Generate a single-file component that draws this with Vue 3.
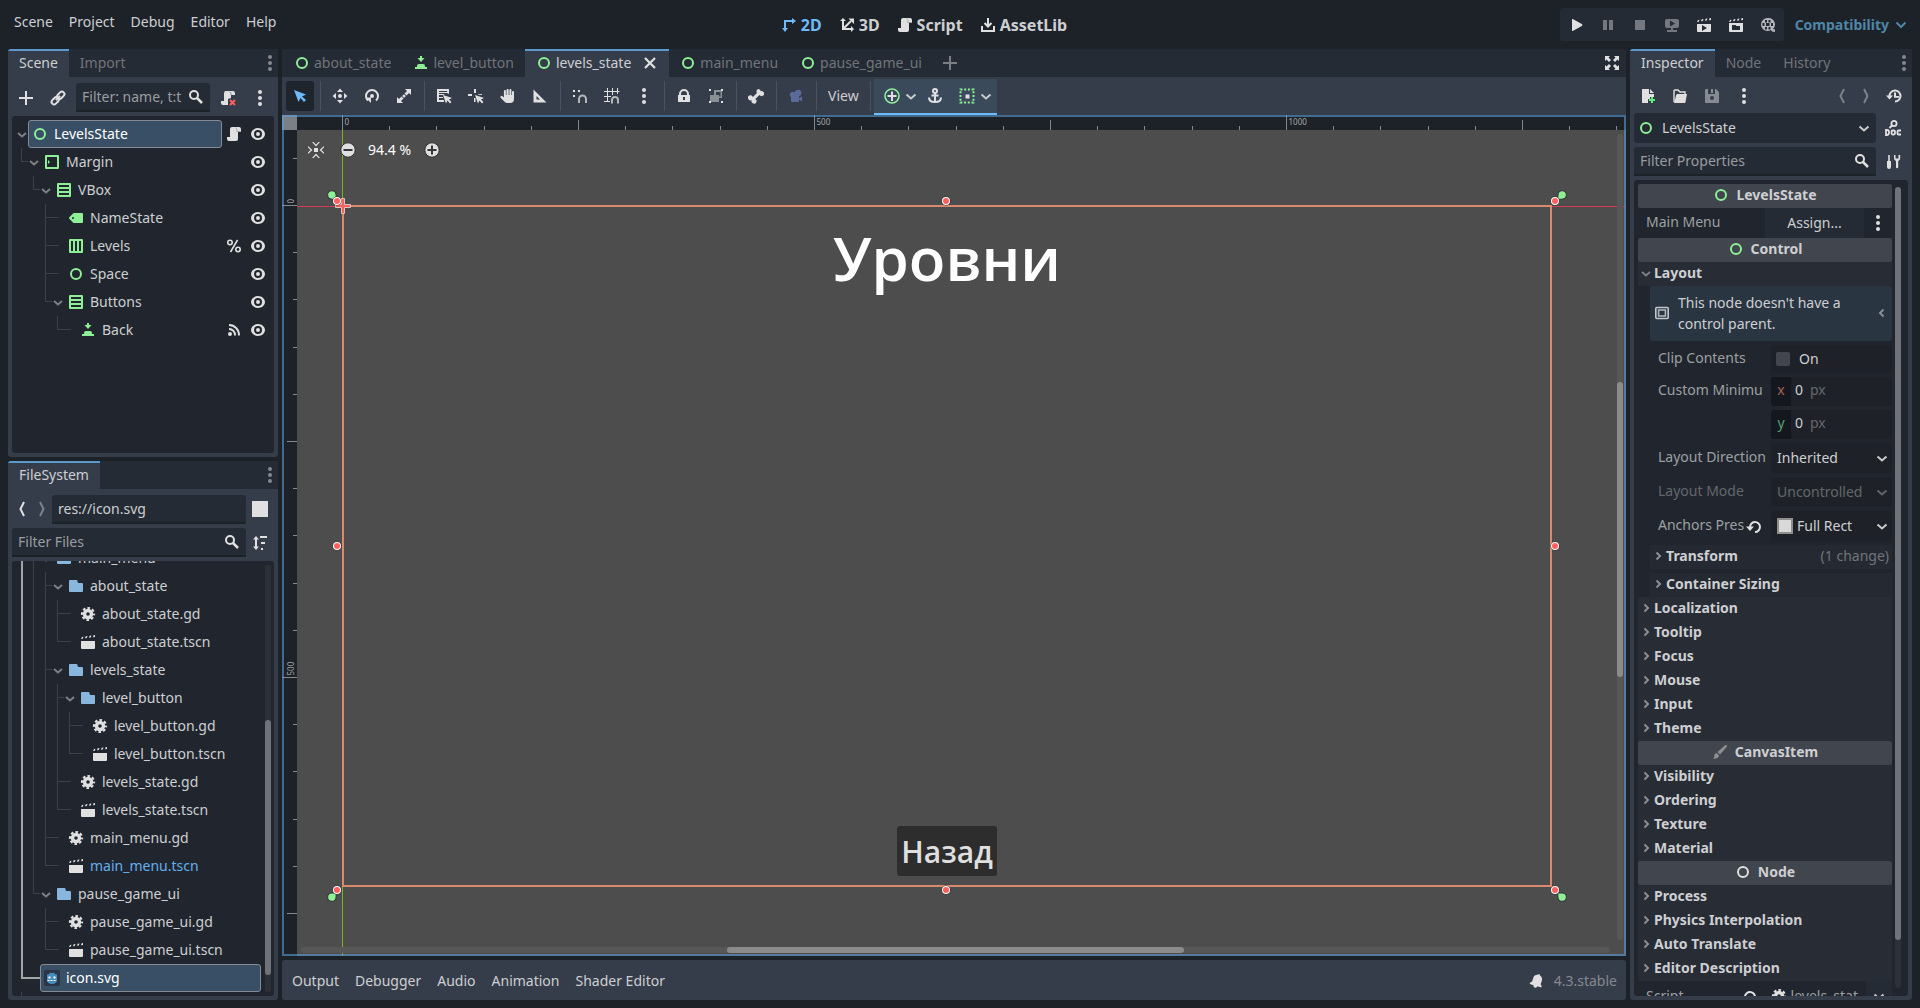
<script setup>
import { h } from 'vue'

const W = '#e0e0e0'
const G = '#8eef97'
const scrollShape = 'M6 1a2 2 0 0 0-2 2v8H1v2a2 2 0 0 0 2 2h7a2 2 0 0 0 2-2V6h3V3a2 2 0 0 0-2-2z'
const clapTop = 'M1 5l1-2 1.500-.3-.7 2.100zM5 4.300l.7-2 1.800-.3-.7 2zM9 3.700l.7-2 1.800-.3-.7 2zM13 3.200l.6-2 1.400-.2v2z'

const glyphs = {
  control: `<circle cx="8" cy="8" r="5" fill="none" stroke="${G}" stroke-width="2"/>`,
  node: `<circle cx="8" cy="8" r="5" fill="none" stroke="${W}" stroke-width="2"/>`,
  margin: `<path fill="${G}" fill-rule="evenodd" d="M2 1a1 1 0 0 0-1 1v12a1 1 0 0 0 1 1h12a1 1 0 0 0 1-1V2a1 1 0 0 0-1-1zm1 2h10v10H3zm1 3v4l2-2z"/>`,
  vbox: `<path fill="${G}" fill-rule="evenodd" d="M2 1a1 1 0 0 0-1 1v12a1 1 0 0 0 1 1h12a1 1 0 0 0 1-1V2a1 1 0 0 0-1-1zm1 2h10v2H3zm0 4h10v2H3zm0 4h10v2H3z"/>`,
  hbox: `<path fill="${G}" fill-rule="evenodd" d="M2 1a1 1 0 0 0-1 1v12a1 1 0 0 0 1 1h12a1 1 0 0 0 1-1V2a1 1 0 0 0-1-1zm1 2h2v10H3zm4 0h2v10H7zm4 0h2v10h-2z"/>`,
  label: `<path fill="${G}" fill-rule="evenodd" d="M6 3a1 1 0 0 0-.7.3l-4 4a1 1 0 0 0 0 1.400l4 4A1 1 0 0 0 6 13h8a1 1 0 0 0 1-1V4a1 1 0 0 0-1-1zM5 7a1 1 0 0 1 0 2 1 1 0 0 1 0-2z"/>`,
  button: `<path fill="${G}" d="M7 1v2H4.500L8 7l3.500-4H9V1zM4 12v-1a2 2 0 0 1 2-2h4a2 2 0 0 1 2 2v1h2v2H2v-2z"/>`,
  eye: `<path fill="${W}" fill-rule="evenodd" d="M8 2C4 2 1 5 1 8s3 6 7 6 7-3 7-6-3-6-7-6zm0 2a4 4 0 0 1 0 8 4 4 0 0 1 0-8zm0 2a2 2 0 0 0 0 4 2 2 0 0 0 0-4z"/>`,
  script: `<path fill="${W}" d="${scrollShape}"/><path d="M11 6V3.500A1.500 1.500 0 0 0 9.500 2M11 5.500h4" fill="none" stroke="#a5a7aa"/>`,
  scriptx: `<path fill="${W}" d="M6 1a2 2 0 0 0-2 2v8H1v2a2 2 0 0 0 2 2h5V9l3-1V5h4V3a2 2 0 0 0-2-2z"/><path d="M11 5V3.500A1.500 1.500 0 0 0 9.500 2" fill="none" stroke="#8b8d91"/><path d="M10 10l5 5m0-5l-5 5" stroke="#ff5f5f" stroke-width="2"/>`,
  unique: `<g fill="none" stroke="${W}" stroke-width="1.600"><circle cx="4" cy="4.500" r="2.200"/><circle cx="12" cy="11.500" r="2.200"/><path d="M11.500 2l-7 12"/></g>`,
  signal: `<g fill="none" stroke="${W}" stroke-width="2"><path d="M3 7a6 6 0 0 1 6 6.500M3 3a10 10 0 0 1 10 10.500"/></g><circle cx="4" cy="12" r="2" fill="${W}"/>`,
  plus: `<path fill="${W}" d="M7 1v6H1v2h6v6h2V9h6V7H9V1z"/>`,
  plusdim: `<path fill="#7b7f84" d="M7 1v6H1v2h6v6h2V9h6V7H9V1z"/>`,
  link: `<g fill="none" stroke="${W}" stroke-width="2" transform="rotate(-45 8 8)"><rect x="0" y="5.500" width="8" height="5" rx="2.500"/><rect x="8" y="5.500" width="8" height="5" rx="2.500"/><path d="M5 8h6"/></g>`,
  search: `<g fill="none" stroke="${W}" stroke-width="2"><circle cx="6" cy="6" r="4"/><path d="M9 9l5 5" stroke-width="2.500"/></g>`,
  dots: `<g fill="${W}"><circle cx="8" cy="2" r="2"/><circle cx="8" cy="8" r="2"/><circle cx="8" cy="14" r="2"/></g>`,
  dotsdim: `<g fill="#85888d"><circle cx="8" cy="2" r="2"/><circle cx="8" cy="8" r="2"/><circle cx="8" cy="14" r="2"/></g>`,
  down: `<path d="M4 7l4 3.500L12 7" fill="none" stroke="#7d8186" stroke-width="2"/>`,
  downlight: `<path d="M3.500 6.500l4.500 4 4.500-4" fill="none" stroke="#c8cacc" stroke-width="2"/>`,
  downdim: `<path d="M3.500 6.500l4.500 4 4.500-4" fill="none" stroke="#63676c" stroke-width="2"/>`,
  downblue: `<path d="M3.500 5.500L8 10l4.500-4.500" fill="none" stroke="#4f85a6" stroke-width="2"/>`,
  right: `<path d="M6.500 4.500L10 8l-3.500 3.500" fill="none" stroke="#8b8e93" stroke-width="2"/>`,
  left: `<path d="M9.500 4.500L6 8l3.500 3.500" fill="none" stroke="#8b8e93" stroke-width="2"/>`,
  back: `<path d="M10 1L6.500 8 10 15" fill="none" stroke="${W}" stroke-width="2"/>`,
  backdim: `<path d="M10 1L6.500 8 10 15" fill="none" stroke="#7d8289" stroke-width="2"/>`,
  fwd: `<path d="M6 1l3.500 7L6 15" fill="none" stroke="#7d8289" stroke-width="2"/>`,
  square: `<path fill="${W}" d="M0 0h16v16H0z"/>`,
  rect: `<path fill="#d9d9d9" stroke="#8e8e8e" stroke-width="2" d="M1 1h14v14H1z"/>`,
  sort: `<path fill="${W}" d="M4 1L1 4.500h2v7H1L4 15l3-3.500H5v-7h2zM8 1h7v2H8zM9 7h4v2H9zM9 13h2v2H9z"/>`,
  folder: `<path fill="#88b6dd" d="M2 2a1 1 0 0 0-1 1v10a1 1 0 0 0 1 1h12a1 1 0 0 0 1-1V6a1 1 0 0 0-1-1h-3.500l-1-1V3a1 1 0 0 0-1-1z"/>`,
  gear: `<g fill="none" stroke="${W}"><circle cx="8" cy="8" r="3.500" stroke-width="3.400"/><circle cx="8" cy="8" r="6" stroke-width="2.200" stroke-dasharray="2.600 2.112" stroke-dashoffset="1.300"/></g>`,
  scene: `<path fill="${W}" d="M1 7h14v7a1 1 0 0 1-1 1H2a1 1 0 0 1-1-1z${clapTop}"/>`,
  godot: `<rect x="0" y="0" width="16" height="16" rx="2" fill="#2b3545"/><path fill="#478cbf" d="M3 5l1-1 1 .6L6 2.500l1.500.5h1l1.500-.5 1 2.100 1-.6 1 1v5.500c0 2-2.500 3.500-5 3.500s-5-1.500-5-3.500z"/><path stroke="#fff" stroke-dasharray="2 1" d="M3.500 10.500h9"/><circle cx="5.500" cy="7.500" r="1.200" fill="#dfe8f0"/><circle cx="10.500" cy="7.500" r="1.200" fill="#dfe8f0"/>`,
  close: `<path d="M3 3l10 10M13 3L3 13" stroke="${W}" stroke-width="2.200"/>`,
  expand: `<path fill="${W}" d="M1 1h5L4.500 2.500 7 5 5 7 2.500 4.500 1 6zM15 1v5l-1.500-1.500L11 7 9 5l2.500-2.500L10 1zM1 15v-5l1.500 1.500L5 9l2 2-2.500 2.500L6 15zM15 15h-5l1.500-1.500L9 11l2-2 2.500 2.500L15 10z"/>`,
  twod: `<g fill="none" stroke="#70bafa" stroke-width="2"><path d="M4 12V4h8"/></g><path fill="#70bafa" d="M11 1l4 3-4 3zM1 11h6l-3 4z"/>`,
  threed: `<g fill="none" stroke="${W}" stroke-width="2"><path d="M4 4v8h8M4 12l8-8"/></g><path fill="${W}" d="M1 4l3-3 3 3zM12 9l3 3-3 3zM9.500 1.500H15V7z"/>`,
  asset: `<g fill="none" stroke="${W}" stroke-width="2"><path d="M2 9v5h12V9M8 1v8M4.500 6L8 9.500 11.500 6"/></g>`,
  play: `<path fill="${W}" d="M4 13.500a.5.500 0 0 0 .8.400l9-5a1 1 0 0 0 0-1.800l-9-5a.5.500 0 0 0-.8.400z"/>`,
  pause: `<path fill="#75797f" d="M3 3h4v10H3zM9 3h4v10H9z"/>`,
  stop: `<path fill="#75797f" d="M3 3h10v10H3z"/>`,
  remote: `<path fill="#75797f" fill-rule="evenodd" d="M3 2a2 2 0 0 0-2 2v5a2 2 0 0 0 2 2h4v2H3v2h10v-2H9v-2h4a2 2 0 0 0 2-2V4a2 2 0 0 0-2-2zm3 1.500L11 6.500 6 9.500z"/>`,
  playscene: `<path fill="${W}" fill-rule="evenodd" d="M1 7h14v7a1 1 0 0 1-1 1H2a1 1 0 0 1-1-1zm5 1v6l5-3z"/><path fill="${W}" d="${clapTop}"/>`,
  playcustom: `<path fill="${W}" fill-rule="evenodd" d="M1 6h14v8a1 1 0 0 1-1 1H2a1 1 0 0 1-1-1zm3 2v5h8V9H8.500L7.500 8z"/><path fill="${W}" d="${clapTop}"/>`,
  movie: `<path fill="#b4b6b9" fill-rule="evenodd" d="M7.500 1a6.500 6.500 0 1 0 0 13 6.500 6.500 0 0 0 3.500-1l1 1.500 3 .5v-2.500l-2-.500A6.500 6.500 0 0 0 7.500 1zM5 3h2v2.500H5zM8.500 3h2v2.500h-2zM2.500 6h2v3h-2zm3.500 0h3.500v3H6zm5 0h2v3h-2zM5 10h2v2.500H5zM8.500 10h2v2.500h-2z"/>`,
  select: `<path fill="#70bafa" d="M2 2l4.500 12 2-4 3.500 4 2-2-4-3.500 4-2z"/>`,
  move: `<path fill="${W}" d="M8 0.500L5 4h6zM8 15.500L5 12h6zM.5 8L4 5v6zM15.500 8L12 5v6zM8 6a2 2 0 1 0 0 4 2 2 0 0 0 0-4z"/>`,
  rotate: `<path d="M4 12.500A6 6 0 1 1 12 12.500" fill="none" stroke="${W}" stroke-width="2"/><path fill="${W}" d="M1.500 9.500H7V15z"/><circle cx="8" cy="8" r="2" fill="${W}"/>`,
  scale: `<path fill="${W}" d="M9 1h6v6l-2-2-2.500 2.500-2-2L11 3zM7 15H1V9l2 2 2.500-2.500 2 2L5 13z"/><circle cx="8" cy="8" r="1.500" fill="${W}"/>`,
  listselect: `<path fill="${W}" fill-rule="evenodd" d="M1 1h12v5l-2-1H3v1h6L7 7H3v2h4v1H3v2h5v2H1zm2 2v1h8V3z"/><path fill="${W}" d="M7 7l3 8.500 1.500-3 2.500 3 1.500-1.500-2.500-2.500 3-1.500z"/>`,
  pivot: `<path fill="${W}" d="M6 1h2v4H6zM0 6h4v2H0zM10 6h4v1l-4-.500zM6 10h1.500v4H6zM7 7l3 8.500 1.500-3 2.500 3 1.500-1.500-2.500-2.500 3-1.500z"/>`,
  hand: `<path fill="${W}" d="M7.500 1a1 1 0 0 0-1 1v5h-.6V3a1 1 0 0 0-2 0v6.500L2.500 8.200A1.200 1.200 0 0 0 .8 10l4 4c.7.700 1.700 1 3.200 1h2a4 4 0 0 0 4-4V4a1 1 0 0 0-2 0v3h-.6V2a1 1 0 0 0-2 0v5h-.7V2a1 1 0 0 0-1.200-1z"/>`,
  ruler: `<path fill="${W}" fill-rule="evenodd" d="M1.500 1.500v13h13zM4.500 8l3.500 3.500H4.500z"/>`,
  snap: `<g fill="${W}"><path d="M1 2h2v2H1zM1 7h2v2H1zM6 2h2v2H6z"/></g><path d="M7 15v-4a3.500 3.500 0 0 1 7 0v4" fill="none" stroke="#b4b6b9" stroke-width="2"/>`,
  gridsnap: `<path fill="none" stroke="${W}" d="M3.500 0v14M8.500 0v7M13.500 0v6M0 3.500h15.500M0 8.500h7M0 13.500h6"/><path d="M8 15.500v-3.500a3 3 0 0 1 6 0v3.500" fill="none" stroke="#b4b6b9" stroke-width="2"/>`,
  lock: `<path fill="${W}" fill-rule="evenodd" d="M8 1a5 5 0 0 0-5 5v1H2v7h12V7h-1V6a5 5 0 0 0-5-5zm0 2a3 3 0 0 1 3 3v1H5V6a3 3 0 0 1 3-3zm-1 6h2v3H7z"/>`,
  group: `<path fill="#8a8e95" fill-rule="evenodd" d="M6 2h8v8h-3v4H2V7h4zm2 2v3h3v1.500h1.500V4z"/><path fill="${W}" d="M1 1h2v2H1zM13 1h2v2h-2zM1 13h2v2H1zM13 13h2v2h-2z"/>`,
  bone: `<path fill="${W}" d="M10.500 1a2.500 2.500 0 0 0-1.500 4L4.800 9a2.500 2.500 0 1 0-1 3 2.500 2.500 0 1 0 3.500-1l4.200-4a2.500 2.500 0 1 0 1.200-3.800A2.500 2.500 0 0 0 10.500 1z"/>`,
  camera: `<path fill="#5b6b99" d="M9.500 2a3 3 0 0 0-3 2.500A2.500 2.500 0 1 0 3 9v4a1 1 0 0 0 1 1h6a1 1 0 0 0 1-1v-1.500l3 2v-5l-3 1.500V8A3 3 0 0 0 9.500 2z"/>`,
  addpoint: `<circle cx="8" cy="8" r="7" fill="none" stroke="${G}" stroke-width="1.600"/><path fill="${W}" d="M7 3.500h2V7h3.500v2H9v4H7V9H3.500V7H7z"/>`,
  anchor: `<g fill="none" stroke="${W}" stroke-width="2"><circle cx="8" cy="3" r="2"/><path d="M8 5v9M4.500 7.500h7M2 9.500c0 3 2.500 4.500 6 4.500s6-1.500 6-4.500"/></g>`,
  container: `<path d="M1.500 1.500h13v13h-13z" fill="none" stroke="${G}" stroke-width="2" stroke-dasharray="2 1.714"/><path fill="${W}" d="M6.500 6.500h4v4h-4z"/>`,
  center: `<path fill="${W}" d="M6 6h4v4H6zM4 0l4 4.500L12 0h-1.500L8 2.500 5.500 0zM4 16l4-4.500 4 4.500h-1.500L8 13.500 5.500 16zM0 4l4.500 4L0 12v-1.500L2.500 8 0 5.500zM16 4l-4.500 4 4.500 4v-1.500L13.500 8 16 5.500z"/>`,
  zoomout: `<circle cx="8" cy="8" r="7.200" fill="${W}" stroke="#333" /><path fill="#33373d" d="M3.500 7h9v2h-9z"/>`,
  zoomin: `<circle cx="8" cy="8" r="7.200" fill="${W}" stroke="#333" /><path fill="#33373d" d="M7 3.500h2V7h3.500v2H9v3.500H7V9H3.500V7H7z"/>`,
  bell: `<path fill="${W}" transform="rotate(18 8 8)" d="M8 1a1.500 1.500 0 0 0-1.400 1A4.500 4.500 0 0 0 3.500 6.500V10L2 11.500v1.500h4a2 2 0 0 0 4 0h4v-1.500L12.500 10V6.500A4.500 4.500 0 0 0 9.400 2 1.500 1.500 0 0 0 8 1z"/>`,
  newfile: `<path fill="${W}" d="M2 1v14h6v-4h2V9h4V6H9V1zM10 1v4h4z"/><path fill="#5fef7a" d="M11 9v2H9v2h2v2h2v-2h2v-2h-2V9z"/>`,
  open: `<path d="M2 14V3a1 1 0 0 1 1-1h3l2 2h5v2" fill="none" stroke="${W}" stroke-width="1.400"/><path fill="${W}" d="M5 6h10l-1.500 8a1 1 0 0 1-1 1H2l2.200-8z"/>`,
  save: `<path fill="#868a91" fill-rule="evenodd" d="M2 1a1 1 0 0 0-1 1v12a1 1 0 0 0 1 1h12a1 1 0 0 0 1-1V4l-3-3h-1v5H4V1zm6 7a2 2 0 1 1 0 4 2 2 0 0 1 0-4z"/><path fill="#868a91" d="M7 1h2v4H7z"/>`,
  history: `<path d="M3.500 8A5.500 5.500 0 1 1 9 13.500" fill="none" stroke="${W}" stroke-width="2"/><path fill="${W}" d="M0 7.500h7L3.500 11.500zM8 4.500h2V8h3v1.800H8z"/>`,
  doc: `<circle cx="9" cy="3.500" r="2.600" fill="none" stroke="${W}" stroke-width="1.800"/><path d="M7 5.500L4.500 8" stroke="${W}" stroke-width="2"/><g fill="none" stroke="${W}" stroke-width="1.800"><path d="M1 10v5h1a2 2 0 0 0 2-2v-1a2 2 0 0 0-2-2zM16 10.500h-2.500a1 1 0 0 0-1 1v2a1 1 0 0 0 1 1H16"/><rect x="6.500" y="10.500" width="3.500" height="4" rx="1.200"/></g>`,
  tools: `<path fill="${W}" d="M3.200 1h1.600v6H6v6a2 2 0 0 1-4 0V7h1.200zM9 1v3.500a3 3 0 0 0 2 2.500v6.500a1.200 1.200 0 0 0 2.200 0V7a3 3 0 0 0 2-2.500V1h-1.700v3.500h-3V1z"/>`,
  frame: `<rect x="1.800" y="2.500" width="12.400" height="11" rx="1" fill="none" stroke="#c4c6c9" stroke-width="1.600"/><rect x="4.600" y="5" width="6.800" height="6" fill="none" stroke="#aeb2b7" stroke-width="1.600"/>`,
  revert: `<path d="M4 9.500A5 5 0 1 1 9 14" fill="none" stroke="${W}" stroke-width="2"/><path fill="${W}" d="M0 8.500h8L4 13z"/>`,
  brush: `<path fill="#8e8e8e" d="M13 1.300a1.200 1.200 0 0 1 1.700 1.700L8 10.500 5.500 8zM4.800 9l2.200 2.200c0 2-1.500 3.600-6 3.600 1.200-1 1-2 1.200-3.400A2.800 2.800 0 0 1 4.800 9z"/>`,
}
const Icon = (p) => h('svg', { viewBox: '0 0 16 16', width: 16, height: 16, 'aria-hidden': 'true', innerHTML: glyphs[p.name] })
Icon.props = ['name']

const menus = ['Scene', 'Project', 'Debug', 'Editor', 'Help']
const screens = [
  { t: '2D', i: 'twod', on: true }, { t: '3D', i: 'threed' }, { t: 'Script', i: 'script' }, { t: 'AssetLib', i: 'asset' },
]
const runs = [['Run', 'play'], ['Pause', 'pause'], ['Stop', 'stop'], ['Remote debug', 'remote'], ['Run scene', 'playscene'], ['Run custom scene', 'playcustom'], ['Movie maker', 'movie']]

// Guide codes, one per depth column: "|" passes, "T" branches, "L" ends; "!" and "E" are the highlighted pass and end.
const nodes = [
  { t: 'LevelsState', i: 'control', g: '', open: true, sel: true, b: ['script', 'eye'] },
  { t: 'Margin', i: 'margin', g: 'L', open: true, b: ['eye'] },
  { t: 'VBox', i: 'vbox', g: ' L', open: true, b: ['eye'] },
  { t: 'NameState', i: 'label', g: '  T', b: ['eye'] },
  { t: 'Levels', i: 'hbox', g: '  T', b: ['unique', 'eye'] },
  { t: 'Space', i: 'control', g: '  T', b: ['eye'] },
  { t: 'Buttons', i: 'vbox', g: '  L', open: true, b: ['eye'] },
  { t: 'Back', i: 'button', g: '   L', b: ['signal', 'eye'] },
]
const files = [
  { t: 'main_menu', i: 'folder', g: '!T', open: true },
  { t: 'about_state', i: 'folder', g: '!|T', open: true },
  { t: 'about_state.gd', i: 'gear', g: '!||T' },
  { t: 'about_state.tscn', i: 'scene', g: '!||L' },
  { t: 'levels_state', i: 'folder', g: '!|T', open: true },
  { t: 'level_button', i: 'folder', g: '!||T', open: true },
  { t: 'level_button.gd', i: 'gear', g: '!|||T' },
  { t: 'level_button.tscn', i: 'scene', g: '!|||L' },
  { t: 'levels_state.gd', i: 'gear', g: '!||T' },
  { t: 'levels_state.tscn', i: 'scene', g: '!||L' },
  { t: 'main_menu.gd', i: 'gear', g: '!|T' },
  { t: 'main_menu.tscn', i: 'scene', g: '!|L', hot: true },
  { t: 'pause_game_ui', i: 'folder', g: '!L', open: true },
  { t: 'pause_game_ui.gd', i: 'gear', g: '! T' },
  { t: 'pause_game_ui.tscn', i: 'scene', g: '! L' },
  { t: 'icon.svg', i: 'godot', g: 'E', sel: true },
]
function guide(row, strong) {
  let d = ''
  const end = row.g.length * 12 + (row.open ? 0 : 7)
  ;[...row.g].forEach((c, k) => {
    const x = k * 12 + 5.5
    if (strong) {
      if (c === '!') d += `M${x + 0.5} 0v28`
      if (c === 'E') d += `M${x + 0.5} 0v14H24`
    } else {
      if (c === '|' || c === 'T') d += `M${x} 0v28`
      if (c === 'L') d += `M${x} 0v13.5`
      if (c === 'T' || c === 'L') d += `M${x} 13.5H${end}`
    }
  })
  return d
}

const sceneTabs = [
  { t: 'about_state', i: 'control' }, { t: 'level_button', i: 'button' }, { t: 'levels_state', i: 'control', on: true },
  { t: 'main_menu', i: 'control' }, { t: 'pause_game_ui', i: 'control' },
]
const tools = ['select', '|', 'move', 'rotate', 'scale', '|', 'listselect', 'pivot', 'hand', 'ruler', '|', 'snap', 'gridsnap', 'dots', '|', 'lock', 'group', '|', 'bone', '|', 'camera', '|']

const step = 47.2
const hTicks = Array.from({ length: 28 }, (_, k) => ({ p: Math.round(60 + k * step) + 0.5, n: k % 10 === 0 ? 15 : k % 5 === 0 ? 10 : 4, t: k % 10 === 0 ? k * 50 : null }))
const vTicks = Array.from({ length: 17 }, (_, j) => j - 1).map((k) => ({ p: Math.round(90 + k * step) + 0.5, n: k % 10 === 0 ? 15 : k % 5 === 0 ? 10 : 4, t: k % 10 === 0 ? k * 50 : null }))
const handles = [[55, 86], [664, 86], [1273, 86], [55, 431], [1273, 431], [55, 775], [664, 775], [1273, 775]]
const anchors = [[50, 80, 45], [1280, 80, 135], [50, 782, -45], [1280, 782, -135]]
const bottomTabs = ['Output', 'Debugger', 'Audio', 'Animation', 'Shader Editor']
const groupsA = ['Localization', 'Tooltip', 'Focus', 'Mouse', 'Input', 'Theme']
const groupsB = ['Visibility', 'Ordering', 'Texture', 'Material']
const groupsC = ['Process', 'Physics Interpolation', 'Auto Translate', 'Editor Description']
</script>

<template>
  <div class="editor">
    <header class="topbar">
      <nav class="menus"><button v-for="m in menus" :key="m">{{ m }}</button></nav>
      <nav class="screens">
        <button v-for="s in screens" :key="s.t" :class="{ on: s.on }"><Icon :name="s.i" />{{ s.t }}</button>
      </nav>
      <div class="right-tools">
        <div class="runbar"><button v-for="r in runs" :key="r[0]" :aria-label="r[0]"><Icon :name="r[1]" /></button></div>
        <button class="renderer">Compatibility<Icon name="downblue" /></button>
      </div>
    </header>

    <main class="work">
      <aside class="side left">
        <section class="dock scene-dock">
          <div class="tabs">
            <button class="tab on">Scene</button><button class="tab">Import</button>
            <button class="tab-menu" aria-label="Dock menu"><Icon name="dotsdim" /></button>
          </div>
          <div class="bar scene-bar">
            <button class="ib" aria-label="Add node"><Icon name="plus" /></button>
            <button class="ib" aria-label="Instantiate scene"><Icon name="link" /></button>
            <label class="field"><input type="text" placeholder="Filter: name, t:t" aria-label="Filter nodes" /><Icon name="search" /></label>
            <button class="ib" aria-label="Detach script"><Icon name="scriptx" /></button>
            <button class="ib" aria-label="Scene options"><Icon name="dots" /></button>
          </div>
          <ul class="tree">
            <li v-for="n in nodes" :key="n.t" class="row">
              <svg v-if="n.g" class="guide" :width="n.g.length * 12 + (n.open ? 0 : 12)" height="28"><path :d="guide(n, false)" /></svg>
              <span v-if="n.open" class="arrow"><Icon name="down" /></span>
              <button class="item" :class="{ sel: n.sel }"><Icon :name="n.i" />{{ n.t }}</button>
              <span class="badges"><Icon v-for="b in n.b" :key="b" :name="b" /></span>
            </li>
          </ul>
        </section>

        <section class="dock file-dock">
          <div class="tabs">
            <button class="tab on">FileSystem</button>
            <button class="tab-menu" aria-label="Dock menu"><Icon name="dotsdim" /></button>
          </div>
          <div class="bar path-bar">
            <button class="nb" aria-label="Back"><Icon name="back" /></button>
            <button class="nb" aria-label="Forward"><Icon name="fwd" /></button>
            <label class="field"><input type="text" value="res://icon.svg" aria-label="Path" /></label>
            <button class="ib" aria-label="Split mode"><Icon name="square" /></button>
          </div>
          <div class="bar filter-bar">
            <label class="field"><input type="text" placeholder="Filter Files" aria-label="Filter files" /><Icon name="search" /></label>
            <button class="ib" aria-label="Sort files"><Icon name="sort" /></button>
          </div>
          <div class="tree file-tree">
            <ul class="list">
              <li v-for="f in files" :key="f.t" class="row">
                <svg class="guide" :width="f.g.length * 12 + (f.open ? 0 : 12)" height="28">
                  <path :d="guide(f, false)" /><path class="strong" :d="guide(f, true)" />
                </svg>
                <span v-if="f.open" class="arrow"><Icon name="down" /></span>
                <button class="item" :class="{ sel: f.sel, hot: f.hot }"><Icon :name="f.i" />{{ f.t }}</button>
              </li>
              <li class="row"><svg class="guide" width="12" height="28"><path d="M5.500 0v28" /></svg></li>
            </ul>
            <div class="vbar"><i class="file-thumb"></i></div>
          </div>
        </section>
      </aside>

      <section class="center">
        <div class="tabs scene-tabs">
          <button v-for="s in sceneTabs" :key="s.t" class="tab" :class="{ on: s.on }">
            <Icon :name="s.i" />{{ s.t }}<Icon v-if="s.on" class="x" name="close" />
          </button>
          <button class="add" aria-label="New scene"><Icon name="plusdim" /></button>
          <button class="tab-menu wide" aria-label="Distraction free"><Icon name="expand" /></button>
        </div>
        <div class="toolbar">
          <template v-for="(t, k) in tools" :key="k">
            <span v-if="t === '|'" class="sep"></span>
            <button v-else class="ib" :class="{ pressed: t === 'select' }" :aria-label="t"><Icon :name="t" /></button>
          </template>
          <button class="view">View</button><span class="sep"></span>
          <div class="context">
            <button class="drop" aria-label="Sizing"><Icon name="addpoint" /><Icon name="downlight" /></button>
            <button class="drop" aria-label="Anchor mode"><Icon name="anchor" /></button>
            <button class="drop" aria-label="Container"><Icon name="container" /><Icon name="downlight" /></button>
          </div>
        </div>

        <div class="viewport">
          <svg class="layer" width="100%" height="100%">
            <rect class="ruler" width="100%" height="15" /><rect class="ruler" width="15" height="100%" />
            <rect width="15" height="15" fill="#7b7f86" />
            <path class="tick" v-for="t in hTicks" :key="'h' + t.p" :d="`M${t.p} ${15 - t.n}V15`" />
            <path class="tick" v-for="t in vTicks" :key="'v' + t.p" :d="`M${15 - t.n} ${t.p}H15`" />
            <template v-for="t in hTicks" :key="'ht' + t.p"><text v-if="t.t !== null" :x="t.p + 2" y="10">{{ t.t }}</text></template>
            <template v-for="t in vTicks" :key="'vt' + t.p"><text v-if="t.t !== null" :transform="`translate(12 ${t.p - 2}) rotate(-90)`">{{ t.t }}</text></template>
            <rect x="60" y="15" width="1" height="100%" fill="#7bb520" />
            <rect x="15" y="91" width="100%" height="1" fill="#d23852" />
          </svg>
          <div class="stage">
            <h1>Уровни</h1>
            <button>Назад</button>
          </div>
          <svg class="layer" width="100%" height="100%">
            <path fill="#ff5f5f" stroke="#d6c5c0" d="M59.500 83.500h3v6h6v3h-6v6h-3v-6h-6v-3h6z" />
            <path v-for="(a, k) in anchors" :key="'a' + k" :transform="`translate(${a[0]} ${a[1]}) rotate(${a[2]})`" fill="#8eef97" stroke="#333" d="M6 0L2.500 3.200A4.200 4.200 0 1 1 2.500-3.200z" />
            <g v-for="(p, k) in handles" :key="'p' + k">
              <circle :cx="p[0]" :cy="p[1]" r="4.500" fill="#333" /><circle :cx="p[0]" :cy="p[1]" r="4" fill="#fff" /><circle :cx="p[0]" :cy="p[1]" r="3" fill="#ff5f5f" />
            </g>
          </svg>
          <div class="zoom">
            <button aria-label="Center view"><Icon name="center" /></button>
            <button aria-label="Zoom out"><Icon name="zoomout" /></button>
            <button class="pct">94.4 %</button>
            <button aria-label="Zoom in"><Icon name="zoomin" /></button>
          </div>
          <div class="hscroll"><i></i></div>
          <div class="vscroll"><i></i></div>
        </div>

        <footer class="bottom">
          <button v-for="b in bottomTabs" :key="b">{{ b }}</button>
          <Icon class="bell" name="bell" /><button class="version">4.3.stable</button>
        </footer>
      </section>

      <aside class="side inspector">
        <section class="dock">
          <div class="tabs">
            <button class="tab on">Inspector</button><button class="tab">Node</button><button class="tab">History</button>
            <button class="tab-menu" aria-label="Dock menu"><Icon name="dotsdim" /></button>
          </div>
          <div class="bar res-bar">
            <button class="ib" aria-label="New resource"><Icon name="newfile" /></button>
            <button class="ib" aria-label="Load resource"><Icon name="open" /></button>
            <button class="ib" aria-label="Save resource"><Icon name="save" /></button>
            <button class="ib" aria-label="More"><Icon name="dots" /></button>
            <span class="grow"></span>
            <button class="nb" aria-label="Previous"><Icon name="backdim" /></button>
            <button class="nb" aria-label="Next"><Icon name="fwd" /></button>
            <button class="ib" aria-label="History"><Icon name="history" /></button>
          </div>
          <div class="bar object-bar">
            <label class="pick"><Icon name="control" /><select aria-label="Edited object"><option>LevelsState</option></select><Icon name="downlight" /></label>
            <button class="ib" aria-label="Documentation"><Icon name="doc" /></button>
          </div>
          <div class="bar prop-filter">
            <label class="field"><input type="text" placeholder="Filter Properties" aria-label="Filter properties" /><Icon name="search" /></label>
            <button class="ib" aria-label="Property tools"><Icon name="tools" /></button>
          </div>
          <div class="tree props-panel">
            <div class="props">
              <h2 class="cat"><Icon name="control" />LevelsState</h2>
              <div class="main-menu"><span>Main Menu</span><button class="assign">Assign...</button><button class="ib" aria-label="Main Menu options"><Icon name="dots" /></button></div>
              <h2 class="cat"><Icon name="control" />Control</h2>
              <button class="group"><Icon name="down" />Layout</button>
              <div class="inner">
                <div class="hint"><Icon name="frame" /><p>This node doesn't have a control parent.</p><Icon name="left" /></div>
                <div class="prop"><label for="clip">Clip Contents</label><div class="val check"><input id="clip" type="checkbox" /><label for="clip">On</label></div></div>
                <div class="prop tall"><label for="mx">Custom Minimu</label>
                  <div class="vec">
                    <div class="val num"><b class="ax">x</b><input id="mx" type="text" value="0" /><span>px</span></div>
                    <div class="val num"><b class="ay">y</b><input type="text" value="0" aria-label="y" /><span>px</span></div>
                  </div>
                </div>
                <div class="prop"><label for="dir">Layout Direction</label><div class="val sel-box"><select id="dir"><option>Inherited</option></select><Icon name="downlight" /></div></div>
                <div class="prop dim"><label for="mode">Layout Mode</label><div class="val sel-box"><select id="mode" disabled><option>Uncontrolled</option></select><Icon name="downdim" /></div></div>
                <div class="prop"><label for="pre">Anchors Pres</label><Icon class="rev" name="revert" /><div class="val sel-box"><Icon name="rect" /><select id="pre"><option>Full Rect</option></select><Icon name="downlight" /></div></div>
                <button class="group sub"><Icon name="right" />Transform<span>(1 change)</span></button>
                <button class="group sub"><Icon name="right" />Container Sizing</button>
              </div>
              <button v-for="g in groupsA" :key="g" class="group"><Icon name="right" />{{ g }}</button>
              <h2 class="cat"><Icon name="brush" />CanvasItem</h2>
              <button v-for="g in groupsB" :key="g" class="group"><Icon name="right" />{{ g }}</button>
              <h2 class="cat"><Icon name="node" />Node</h2>
              <button v-for="g in groupsC" :key="g" class="group"><Icon name="right" />{{ g }}</button>
              <div class="script-row"><span>Script</span><Icon name="revert" /><button class="res"><Icon name="gear" />levels_stat</button><button class="more" aria-label="Script options"><Icon name="downlight" /></button></div>
            </div>
            <div class="vbar"><i class="prop-thumb"></i></div>
          </div>
        </section>
      </aside>
    </main>
  </div>
</template>

<style>
html, body { margin: 0; background: #1d2229; }
</style>

<style scoped>
.editor { height: 100vh; display: flex; flex-direction: column; background: #1d2229; color: #cdcfd2; font: 14px/20px "Noto Sans", "Open Sans", sans-serif; overflow: hidden; }
.editor *, .editor *::before { box-sizing: border-box; }
button, input, select { font: inherit; color: inherit; background: none; border: 0; padding: 0; margin: 0; outline: 0; border-radius: 0; appearance: none; white-space: nowrap; }
ul { list-style: none; margin: 0; padding: 0; }
svg { flex: none; display: block; }
h1, h2, p { margin: 0; }

.topbar { flex: none; height: 49px; display: flex; justify-content: space-between; padding: 0 8px; }
.menus { display: flex; gap: 16px; height: 44px; padding-left: 6px; }
.screens { display: flex; gap: 17px; height: 49px; padding-left: 12px; font-weight: 700; font-size: 16px; line-height: 22px; }
.screens button { display: flex; align-items: center; gap: 4px; }
.screens .on { color: #70bafa; }
.right-tools { display: flex; padding: 8px 0; gap: 11px; }
.runbar { display: flex; background: #252b34; border-radius: 3px; }
.runbar button { width: 32px; display: grid; place-items: center; }
.renderer { display: flex; align-items: center; gap: 4px; font-weight: 700; color: #4f85a6; padding-right: 3px; }

.work { flex: 1; min-height: 0; display: flex; gap: 4px; padding: 0 8px 8px; }
.side { flex: none; display: flex; flex-direction: column; gap: 4px; }
.left { width: 270px; }
.inspector { width: 282px; }
.dock { min-height: 0; flex: 1 1 0; display: flex; flex-direction: column; background: #363d4a; border-radius: 3px; overflow: hidden; }
.scene-dock { flex-grow: 408; }
.file-dock { flex-grow: 539; }
.tabs { flex: none; height: 28px; display: flex; background: #252b34; }
.tab { padding: 0 11px; color: #70747a; display: flex; align-items: center; gap: 4px; }
.tab.on { background: #363d4a; color: #cdcfd2; box-shadow: inset 0 2px #5a99cd; }
.tab-menu { margin-left: auto; width: 16px; display: grid; place-items: center; }
.tab-menu.wide { width: 28px; }

.bar { flex: none; display: flex; align-items: center; }
.ib { flex: none; width: 28px; height: 30px; display: grid; place-items: center; }
.nb { flex: none; width: 20px; height: 28px; display: grid; place-items: center; }
.field { flex: 1; min-width: 0; height: 29px; display: flex; align-items: center; padding: 0 6px; background: #252b34; border-bottom: 2px solid #1d2229; border-radius: 3px 3px 0 0; }
.field input { flex: 1; min-width: 0; width: 0; height: 26px; }
input::placeholder { color: #9a9da1; opacity: 1; }
.scene-bar { height: 39px; padding: 2px 4px 0; gap: 4px; }
.path-bar { height: 36px; padding: 4px 4px 0; }
.filter-bar { height: 36px; padding: 0 4px 1px; }

.tree { flex: 1; min-height: 0; margin: 0 4px 4px; background: #21262e; border-radius: 3px; overflow: hidden; padding: 4px 0 0 4px; }
.row { display: flex; height: 28px; align-items: center; }
.guide { fill: none; stroke: #3c4149; }
.strong { stroke: #a3a5a8; stroke-width: 2; }
.arrow { flex: none; width: 12px; display: flex; justify-content: center; }
.item { flex: 1; height: 28px; display: flex; align-items: center; gap: 6px; padding-left: 4px; text-align: left; }
.item.sel { background: #384f65; padding-left: 3px; border: 1px solid #868b91; border-radius: 3px; color: #fff; }
.item.hot { color: #62aeef; }
.badges { display: flex; gap: 8px; padding: 0 8px 0 4px; }
.file-tree { display: flex; padding-top: 0; }
.list { flex: 1; margin-top: -17px; }
.vbar { flex: none; width: 6px; margin: 4px 3px 4px 4px; background: #2c3139; border-radius: 3px; display: flex; flex-direction: column; }
.vbar i { background: #6f7278; border-radius: 3px; }
.file-thumb { margin-top: 155px; height: 255px; }

.center { flex: 1; min-width: 0; display: flex; flex-direction: column; }
.scene-tabs { border-radius: 3px 3px 0 0; padding-left: 1px; }
.x { margin-left: 7px; }
.add { width: 34px; display: grid; place-items: center; }
.toolbar { flex: none; height: 38px; padding-left: 4px; background: #363d4a; display: flex; align-items: center; gap: 4px; }
.pressed { background: #1f252d; border-radius: 3px; }
.sep { width: 4px; height: 30px; display: flex; justify-content: center; }
.sep::before { content: ""; width: 1px; background: #4c525e; }
.view { padding: 0 6px; }
.context { align-self: flex-end; height: 36px; margin-left: -3px; background: #3b4a5b; border-bottom: 2px solid #70bafa; display: flex; align-items: center; gap: 8px; padding: 0 3px 0 10px; }
.drop { display: flex; gap: 3px; }
.drop + .drop + .drop { margin-left: 8px; }

.viewport { flex: 1; min-height: 0; position: relative; background: #4d4d4d; overflow: hidden; }
.viewport::after { content: ""; position: absolute; inset: 0; border: 2px solid rgba(92, 156, 214, 0.6); pointer-events: none; }
.layer { position: absolute; inset: 0; pointer-events: none; }
.ruler { fill: #1d2229; }
.tick { stroke: #85888d; }
.layer text { font-size: 8px; fill: #a6a8ab; }
.stage { position: absolute; left: 60px; top: 90px; width: 1210px; height: 682px; border: 2px solid #d98a6c; display: flex; flex-direction: column; align-items: center; justify-content: space-between; padding: 9px 0; font-family: "Open Sans", "Noto Sans", sans-serif; color: #fff; }
.stage h1 { font-size: 60px; line-height: 84px; font-weight: 600; }
.stage button { height: 50px; padding: 2px 4px 0; background: #2d2d2d; border-radius: 3px; font-size: 30px; line-height: 42px; font-weight: 600; color: #dfdfdf; }
.zoom { position: absolute; left: 26px; top: 24px; display: flex; align-items: center; height: 22px; gap: 16px; color: #fff; text-shadow: 0 0 2px #222; }
.zoom .pct { margin: 0 -3px 0 -4px; }
.hscroll { position: absolute; left: 19px; right: 16px; bottom: 3px; height: 6px; background: #575757; border-radius: 3px; }
.hscroll i { display: block; height: 6px; margin-left: 426px; width: 457px; background: #8b8b8b; border-radius: 3px; }
.vscroll { position: absolute; top: 19px; right: 3px; bottom: 16px; width: 6px; background: #575757; border-radius: 3px; }
.vscroll i { display: block; width: 6px; margin-top: 248px; height: 295px; background: #8b8b8b; border-radius: 3px; }
.bottom { flex: none; height: 40px; margin-top: 4px; padding: 2px 9px 0 10px; background: #363d4a; border-radius: 3px; display: flex; align-items: center; gap: 16px; }
.bell { margin-left: auto; }
.version { margin-left: -7px; color: #85898f; }

.res-bar { height: 36px; padding: 2px 4px 0; gap: 4px; }
.grow { flex: 1; }
.object-bar { height: 32px; padding: 0 4px 2px; gap: 2px; }
.object-bar .ib, .prop-filter .ib { width: 30px; }
.pick { flex: 1; height: 30px; display: flex; align-items: center; padding: 0 4px; background: #252b34; border-radius: 3px; }
.pick select { flex: 1; height: 28px; padding-left: 8px; }
.prop-filter { height: 35px; padding: 0 4px 2px; gap: 2px; }
.props-panel { display: flex; padding: 4px 4px 0; }
.props { flex: 1; min-width: 0; display: flex; flex-direction: column; }
.props > * { flex: none; }
.props-panel .vbar { margin: 3px 3px 8px; }
.prop-thumb { height: 753px; }
.cat { height: 24px; display: flex; align-items: center; justify-content: center; gap: 7px; background: #41454d; border-radius: 2px; font-size: 14px; padding-bottom: 2px; }
.main-menu { height: 30px; display: flex; align-items: center; padding-left: 8px; color: #9da0a3; }
.main-menu span { flex: 1; padding-bottom: 2px; }
.assign { width: 99px; height: 30px; background: #252b34; color: #cdcfd2; }
.group { height: 24px; display: flex; align-items: center; background: #282c35; font-weight: 700; text-align: left; padding-bottom: 2px; }
.group span { margin-left: auto; padding-right: 3px; font-weight: 400; color: #70747a; }
.inner { padding-left: 12px; display: flex; flex-direction: column; gap: 4px; }
.sub { background: #252931; }
.hint { height: 55px; padding: 0 2px 1px 4px; display: flex; align-items: center; background: #2a3542; border-radius: 3px; line-height: 21px; }
.hint p { flex: 1; padding: 0 16px 0 8px; }
.prop { display: flex; align-items: center; padding-left: 8px; color: #9da0a3; }
.prop > label { flex: 1; white-space: nowrap; padding-bottom: 2px; }
.prop.dim { color: #63676c; }
.prop.tall { align-items: flex-start; }
.prop.tall > label { padding-top: 3px; }
.val { flex: none; width: 121px; height: 30px; display: flex; align-items: center; background: #1e2228; border-radius: 3px; color: #cdcfd2; }
.dim .val { color: #63676c; }
.dim select { opacity: 1; }
.check { height: 28px; padding-left: 5px; gap: 9px; }
.check input { width: 14px; height: 14px; background: #42454d; border-radius: 2px; }
.vec { display: flex; flex-direction: column; gap: 4px; }
.num { height: 29px; align-items: flex-start; line-height: 26px; }
.num b { width: 20px; height: 29px; text-align: center; font-weight: 400; background: #14171e; border-radius: 3px 0 0 3px; }
.num input { width: 19px; height: 26px; padding-left: 4px; }
.num span { color: #63676c; }
.ax { color: #a3655a; }
.ay { color: #57a06f; }
.sel-box { padding: 0 2px 0 6px; }
.sel-box select { flex: 1; min-width: 0; height: 28px; }
.sel-box svg + select { padding-left: 4px; }
.rev { margin-right: 9px; }
.script-row { height: 30px; display: flex; align-items: center; padding-left: 8px; color: #9da0a3; }
.script-row span { flex: 1; }
.res { display: flex; align-items: center; gap: 4px; padding: 0 8px 0 14px; }
.more { width: 26px; height: 30px; display: grid; place-items: center; background: #252b34; }
</style>
